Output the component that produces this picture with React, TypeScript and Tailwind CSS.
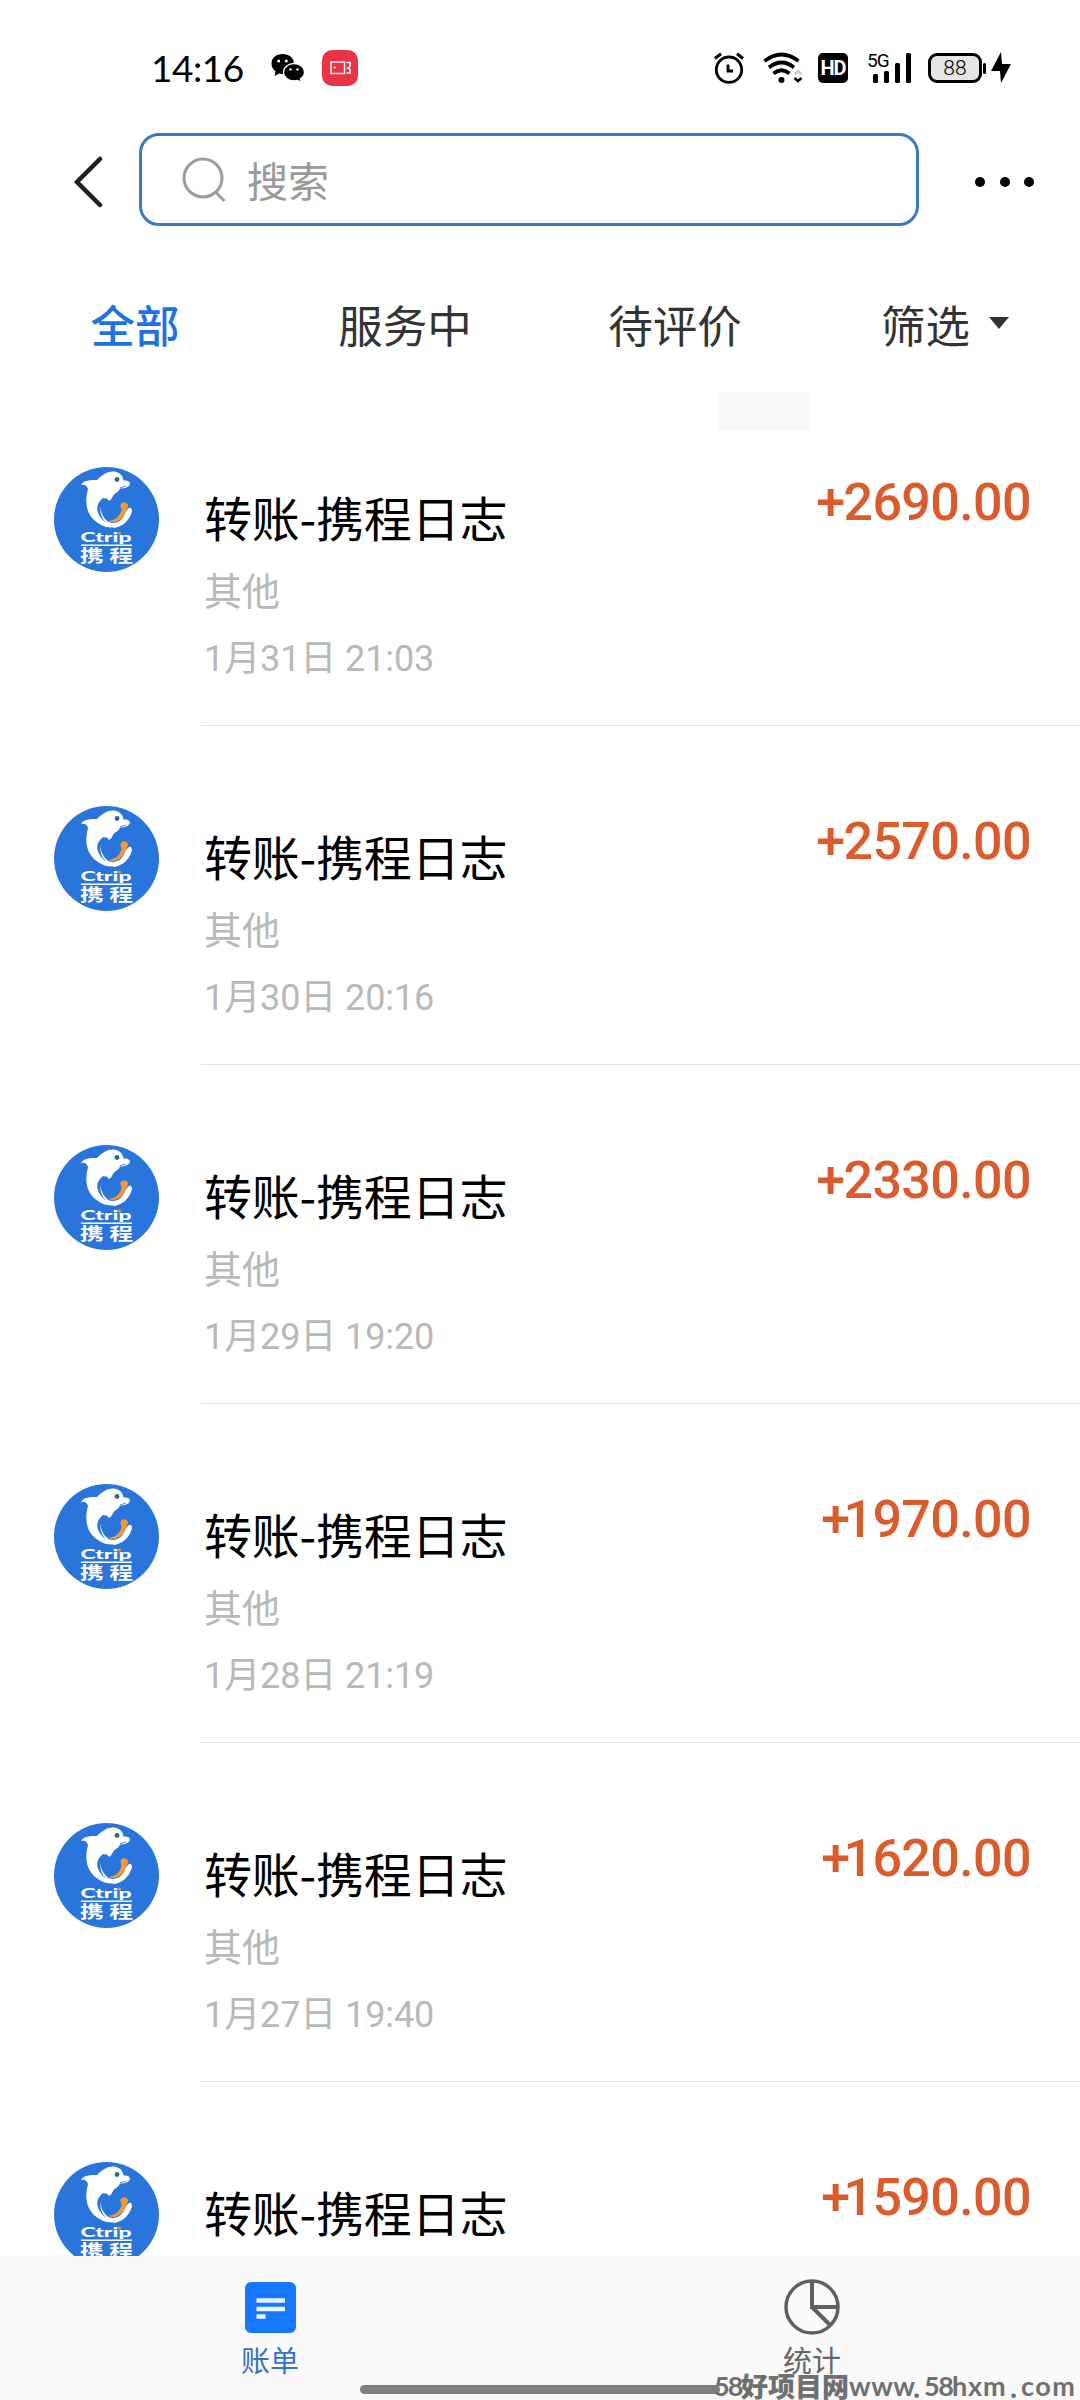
import React from "react";

const bills = [
  { amount: "2690.00", date: "1月31日 21:03" },
  { amount: "2570.00", date: "1月30日 20:16" },
  { amount: "2330.00", date: "1月29日 19:20" },
  { amount: "1970.00", date: "1月28日 21:19" },
  { amount: "1620.00", date: "1月27日 19:40" },
  { amount: "1590.00", date: "1月26日 20:32" },
];

const StatusBar = (): React.JSX.Element => {
  return (
    <div className="flex h-[133px] items-start justify-between pl-[151px] pr-[69px] pt-[45px]">
      <div className="flex h-[46px] items-center">
        <span className="-mt-[2px] w-[120px] font-['Lato'] text-[37px] leading-none tracking-[-0.5px]">14:16</span>
        <svg className="block" width="34" height="30" viewBox="0 0 34 30">
          <path d="M11.500 1C5.200 1 .5 5 .5 10.500c0 3.500 1.500 6 4 7.800L3.500 23l4.500-2.500c1.200.3 2.300.5 3.500.5 6.500 0 11.500-4.500 11.500-10.300S18 1 11.500 1Z" />
          <path d="M23 10.500c-5.800 0-10.500 3.800-10.500 8.700S17.200 28 23 28c1.300 0 2.500-.2 3.600-.5l3.600 1.800-.8-3.500c2.500-1.600 4.100-4 4.100-6.600 0-4.900-4.700-8.700-10.500-8.700Z" stroke="#fff" strokeWidth="1.300" />
          <circle cx="7.700" cy="8" r="1.500" fill="#fff" />
          <circle cx="15.300" cy="8" r="1.500" fill="#fff" />
          <circle cx="19.500" cy="16.500" r="1.200" fill="#fff" />
          <circle cx="26.500" cy="16.500" r="1.200" fill="#fff" />
        </svg>
        <svg className="ml-[17px] block" width="36" height="36" viewBox="0 0 36 36">
          <rect width="36" height="36" rx="10" fill="#e93446" />
          <g fill="none" stroke="#fff" strokeWidth="1.400">
            <rect x="9" y="12" width="13.500" height="11.500" />
            <path d="M24.500 12.500h3.500v4l-2.500 1.500 2.500 1v4h-3.500" />
          </g>
          <circle cx="12.800" cy="17.500" r="1.100" fill="#fff" />
        </svg>
      </div>
      <div className="flex h-[46px] items-center">
        <svg className="block" width="30" height="32" viewBox="0 0 30 32" fill="none" stroke="#000">
          <circle cx="15" cy="17.700" r="12.700" strokeWidth="2.800" />
          <path d="M14 12.500v6.500h5" strokeWidth="2.800" />
          <path d="M1 6.500l6-4.700M29 6.500l-6-4.700" strokeWidth="3" />
        </svg>
        <svg className="ml-[19px] block" width="40" height="32" viewBox="0 0 40 32" fill="none" stroke="#000" strokeWidth="3.700">
          <path d="M1.500 9Q18.500-4 35.500 9M6 15.500q12.500-10 25 0M10.500 21.500q8-6.500 16 0" />
          <circle cx="18.500" cy="28" r="3" fill="#000" stroke="none" />
          <path d="M31.500 22.500l3.500-3.500 3.500 3.500" stroke="#ccc" strokeWidth="2.500" />
          <path d="M31.500 26l3.500 3 3.500-3" strokeWidth="2.600" />
        </svg>
        <span className="ml-[15px] flex h-[30px] w-[30px] items-center justify-center rounded-[5px] bg-black font-['Roboto'] text-[20px] font-bold leading-none tracking-[-1px] text-white">HD</span>
        <div className="relative ml-[19px] h-[32px] w-[44px]">
          <span className="absolute left-0 top-0 font-['Roboto'] text-[19px] leading-[17px] tracking-[-1px]">5G</span>
          <svg className="block" width="44" height="32" viewBox="0 0 44 32">
            <rect x="6" y="22" width="5" height="9" rx="1.500" />
            <rect x="17" y="19" width="5" height="12" rx="1.500" />
            <rect x="28" y="11" width="5" height="20" rx="1.500" />
            <rect x="39" y="1" width="5" height="30" rx="1.500" />
          </svg>
        </div>
        <span className="ml-[17px] flex h-[30px] w-[54px] items-center justify-center rounded-[9px] border-[3px] border-black bg-[#e6e6e6] font-['Roboto'] text-[21px] font-light leading-none">88</span>
        <span className="ml-[1px] h-[11px] w-[3px] rounded-sm bg-black" />
        <svg className="ml-[5px] block" width="20" height="32" viewBox="0 0 20 32">
          <path d="M10 0L0 19h9l1 12L20 12h-9z" />
        </svg>
      </div>
    </div>
  );
};

const SearchRow = (): React.JSX.Element => {
  return (
    <div className="flex h-[93px] items-center">
      <svg className="ml-[73px] mt-[5px] block" width="30" height="54" viewBox="0 0 30 54">
        <path d="M27 4L4 27l23 23" fill="none" stroke="#1f1f1f" strokeWidth="4.500" strokeLinecap="round" />
      </svg>
      <div className="ml-[36px] flex h-[93px] w-[780px] items-center rounded-[20px] border-[3px] border-[#3a7abf] pl-[40px]">
        <svg className="block" width="46" height="46" viewBox="0 0 46 46" fill="none" stroke="#9b9d9a" strokeWidth="3">
          <circle cx="21" cy="21" r="19" />
          <path d="M33 34.500l9.500 9.500" />
        </svg>
        <span className="ml-[19px] text-[41px] leading-none text-[#999]">搜索</span>
      </div>
      <div className="ml-[56px] mt-[4px] flex gap-[14.500px]">
        <span className="h-2.5 w-2.5 rounded-full bg-black" />
        <span className="h-2.5 w-2.5 rounded-full bg-black" />
        <span className="h-2.5 w-2.5 rounded-full bg-black" />
      </div>
    </div>
  );
};

const Tabs = (): React.JSX.Element => {
  return (
    <div className="grid h-[161px] grid-cols-4 items-start pt-[65px] text-center text-[44.500px] leading-[66px] text-[#333]">
      <span className="font-medium text-[#1f72e4]">全部</span>
      <span>服务中</span>
      <span>待评价</span>
      <span className="flex items-center justify-center">
        筛选
        <svg className="-mt-[2px] ml-[19px] block" width="20" height="12" viewBox="0 0 20 12">
          <path d="M0 0h20L10 12z" fill="#333" />
        </svg>
      </span>
    </div>
  );
};

const Avatar = (): React.JSX.Element => {
  return (
    <svg className="ml-[54px] mt-[80px] block shrink-0" width="105" height="105" viewBox="0 0 105 105">
      <circle cx="52.500" cy="52.500" r="52.500" fill="#2a75dc" />
      <path d="M27 18c3-5 9-5 16-5C49 7 54 4 60 4.500c5 .5 9 4 9.500 9 4-.5 6.500 1 6.500 3 0 3-5 5-10 5-1 3-4 4.500-6 6-2 3-2.500 5-5 7-1-2-2-3-3-3.500-7 4-7 11-3 17 2 4 5 7 9 8 7 0 11-4 13-10 2-4 4.500-6 6-5 2 3-1 10-6 15-7 6-19 6-27 0C33 49 30 37 34 22c-1-4-4-5-7-4z" fill="#fff" />
      <path d="M49 31C41 37 41 46 51 55c5 2 12-1 16-8l1-10-8 4-5-8z" fill="#2a75dc" />
      <path d="M46.500 39c0 8 4 14 11 18 6 1 11-3 14-10 2-5 5-6 6.500-4-1 8-8 15-17 18-9-3-16-11-14.500-22z" fill="#fff" />
      <path d="M49.500 40c-1 7 3 12 9 14 5 0 8-4 9.500-11v-4h-8z" fill="#2a75dc" />
      <path d="M54 54c8-1 12-5 13.500-11 0-2-1.500-3-1-5 .5-3 5-4 7-1 1.500 2-.5 4-1.500 7-3 8-9 13-18 10z" fill="#f19a34" />
      <path d="M52 30c1 2 2 3 3 3.500 3-2 3-5 5-6.500l-4-2z" fill="#fff" />
      <circle cx="63" cy="12.500" r="2.400" fill="#246a9b" />
      <path d="M66 21l6-2" stroke="#2a75dc" strokeWidth=".8" />
      <text x="26.500" y="75" textLength="51" lengthAdjust="spacingAndGlyphs" className="font-['Lato'] text-[14px] font-black" fill="#fff">Ctrip</text>
      <circle cx="65.500" cy="66" r="1.500" fill="#f19a34" />
      <rect x="27" y="77.500" width="51" height="1.500" fill="#fff" />
      <text x="26" y="94.500" textLength="53" lengthAdjust="spacingAndGlyphs" className="text-[17px] font-bold" fill="#fff">携 程</text>
    </svg>
  );
};

const BillRow = ({ amount, date }: { amount: string; date: string }): React.JSX.Element => {
  return (
    <div className="flex h-[339px] shrink-0">
      <Avatar />
      <div className="ml-[42px] flex flex-1 justify-between border-b border-[#e2e2e2] pl-[3px] pr-[49px]">
        <div className="pt-[93px]">
          <div className="text-[48px] leading-[72px] tracking-[-0.2px] text-black">转账-携程日志</div>
          <div className="mt-[9px] text-[38px] leading-[56px] text-[#b8b8b8]">其他</div>
          <div className="mt-[15px] font-['Roboto','Noto_Sans_CJK_SC',sans-serif] text-[36px] leading-[54px] tracking-[-0.1px] text-[#b8b8b8]">{date}</div>
        </div>
        <div className="flex pt-[86px] font-['Roboto'] text-[52px] font-medium leading-[60px] tracking-[-0.6px] text-[#db5b2c]">
          <span className={amount.startsWith("1") ? "-mr-[6px]" : "-mr-[1px]"}>+</span>
          <span>{amount}</span>
        </div>
      </div>
    </div>
  );
};

const BottomNav = (): React.JSX.Element => {
  return (
    <div className="relative grid h-[144px] shrink-0 grid-cols-2 bg-[#fafafa]">
      <div className="flex flex-col items-center pt-[26px]">
        <svg className="block" width="51" height="51" viewBox="0 0 51 51">
          <rect width="51" height="51" rx="6" fill="#1677ff" />
          <path d="M11.500 18.500H40M11.500 27H40M11.500 34.500h9" stroke="#e6f5ff" strokeWidth="4.500" />
        </svg>
        <span className="mt-[4px] text-[29px] leading-[44px] text-[#3572c6]">账单</span>
      </div>
      <div className="flex flex-col items-center pl-[4px] pt-[23px]">
        <svg className="block" width="56" height="56" viewBox="0 0 56 56" fill="none" stroke="#5f5f5f" strokeWidth="3.500">
          <circle cx="28" cy="28" r="26" />
          <path d="M28 2v26h26M28 28l18.500 18.500" strokeWidth="4" />
        </svg>
        <span className="mt-[2px] text-[29px] leading-[44px] text-[#666]">统计</span>
      </div>
      <div className="absolute left-[360px] top-[129px] h-[9px] w-[360px] rounded-full bg-[#7f7f7f]" />
      <div className="absolute left-[714px] top-[113px] flex items-center whitespace-nowrap font-['Lato'] text-[27px] font-bold leading-[34px] text-[#6f6f6f]">
        <span className="w-[27px] tracking-[-2px]">58</span>
        <span className="w-[108px] font-['Noto_Sans_CJK_SC',sans-serif] text-[27px] font-black">好项目网</span>
        <span className="w-[64px] tracking-[0.5px]">www</span>
        <span className="w-[11px] text-[30px]">.</span>
        <span className="w-[28px] tracking-[-1.500px]">58</span>
        <span className="w-[58px] tracking-[0.8px]">hxm</span>
        <span className="w-[11px] text-[30px]">.</span>
        <span className="w-[60px] tracking-[1.5px]">com</span>
      </div>
    </div>
  );
};

const App = (): React.JSX.Element => {
  return (
    <div className="flex h-[2400px] w-[1080px] flex-col overflow-hidden bg-white font-['Noto_Sans_CJK_SC',sans-serif] text-black">
      <StatusBar />
      <SearchRow />
      <Tabs />
      <div className="relative min-h-0 flex-1 overflow-hidden">
        <div className="absolute left-[719px] top-[5px] h-[39px] w-[90px] bg-[#f7f8fa]" />
        {bills.map((bill) => (
          <BillRow key={bill.amount} amount={bill.amount} date={bill.date} />
        ))}
      </div>
      <BottomNav />
    </div>
  );
};

export default App;
